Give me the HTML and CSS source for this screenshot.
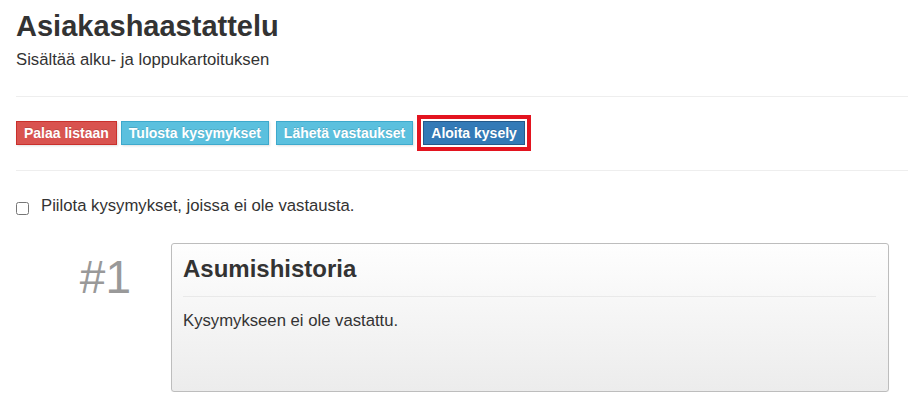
FILE: index.html
```html
<!DOCTYPE html>
<html lang="fi">
<head>
<meta charset="utf-8">
<title>Asiakashaastattelu</title>
<link rel="stylesheet" href="styles.css">
</head>
<body>
<div class="page">
  <h1 class="title">Asiakashaastattelu</h1>
  <p class="subtitle">Sisältää alku- ja loppukartoituksen</p>
  <hr class="rule">
  <div class="actions">
    <a class="btn btn-danger">Palaa listaan</a>
    <a class="btn btn-info">Tulosta kysymykset</a>
    <a class="btn btn-info btn-wide-gap">Lähetä vastaukset</a>
    <span class="highlight"><a class="btn btn-primary">Aloita kysely</a></span>
  </div>
  <hr class="rule rule-second">
  <label class="toggle">
    <input type="checkbox" class="toggle-box">
    <span class="toggle-text">Piilota kysymykset, joissa ei ole vastausta.</span>
  </label>
  <div class="question">
    <div class="question-num">#1</div>
    <div class="question-card">
      <h2 class="question-title">Asumishistoria</h2>
      <hr class="card-rule">
      <p class="question-body">Kysymykseen ei ole vastattu.</p>
    </div>
  </div>
</div>
</body>
</html>
```
FILE: styles.css
```css
html, body {
  margin: 0;
  padding: 0;
  background: #fff;
}

body {
  font-family: "Liberation Sans", Arial, Helvetica, sans-serif;
  color: #333;
}

.page {
  padding: 0 0 0 16px;
}

.title {
  margin: 10px 0 0;
  font-size: 29px;
  line-height: 32px;
  font-weight: bold;
  color: #333;
}

.subtitle {
  margin: 8px 0 0;
  font-size: 16.7px;
  line-height: 20px;
}

.rule {
  margin: 26px 0 0;
  border: 0;
  border-top: 1px solid #eee;
  height: 0;
}

.rule-second {
  margin-top: 19px;
}

.actions {
  display: flex;
  align-items: center;
  gap: 4px;
  margin-top: 18px;
}

.btn {
  display: inline-block;
  box-sizing: border-box;
  height: 24px;
  padding: 3px 7px;
  font-size: 14px;
  line-height: 16px;
  font-weight: bold;
  color: #fff;
  border: 1px solid transparent;
  border-radius: 0;
  text-shadow: 0 -1px 0 rgba(0, 0, 0, 0.15);
  box-shadow: 1px 1px 2px rgba(0, 0, 0, 0.12);
  white-space: nowrap;
  cursor: pointer;
}

.btn-danger {
  background: #d9534f;
  border-color: #c9302c;
}

.btn-info {
  background: #5bc0de;
  border-color: #3ea9cc;
}

.btn-wide-gap {
  margin-left: 3px;
}

.btn-primary {
  background: #337ab7;
  border-color: #24598a;
  box-shadow: none;
}

.highlight {
  display: inline-block;
  border: 4px solid #e3141f;
  padding: 2px;
  background: #fff;
  line-height: 0;
}

.toggle {
  display: flex;
  align-items: flex-start;
  margin-top: 25px;
  font-size: 16.7px;
  line-height: 20px;
}

.toggle-box {
  width: 13px;
  height: 13px;
  margin: 6px 12px 0 0;
}

.question {
  display: flex;
  align-items: flex-start;
  margin-top: 27px;
  margin-right: 19px;
}

.question-num {
  flex: 0 0 155px;
  box-sizing: border-box;
  padding-right: 40px;
  margin-top: 11px;
  text-align: right;
  font-size: 46px;
  line-height: 46px;
  color: #999;
}

.question-card {
  flex: 1;
  border: 1px solid #bdbdbd;
  border-radius: 3px;
  background: linear-gradient(#fefefe, #ececec);
  padding: 11px 12px 60px 11px;
  box-shadow: 0 1px 1px rgba(0, 0, 0, 0.05);
}

.question-title {
  margin: 0;
  font-size: 24px;
  line-height: 28px;
  font-weight: bold;
  color: #333;
}

.card-rule {
  margin: 13px 0 0;
  border: 0;
  border-top: 1px solid #e9e9e9;
  height: 0;
}

.question-body {
  margin: 14px 0 0;
  font-size: 16.7px;
  line-height: 20px;
}
```
